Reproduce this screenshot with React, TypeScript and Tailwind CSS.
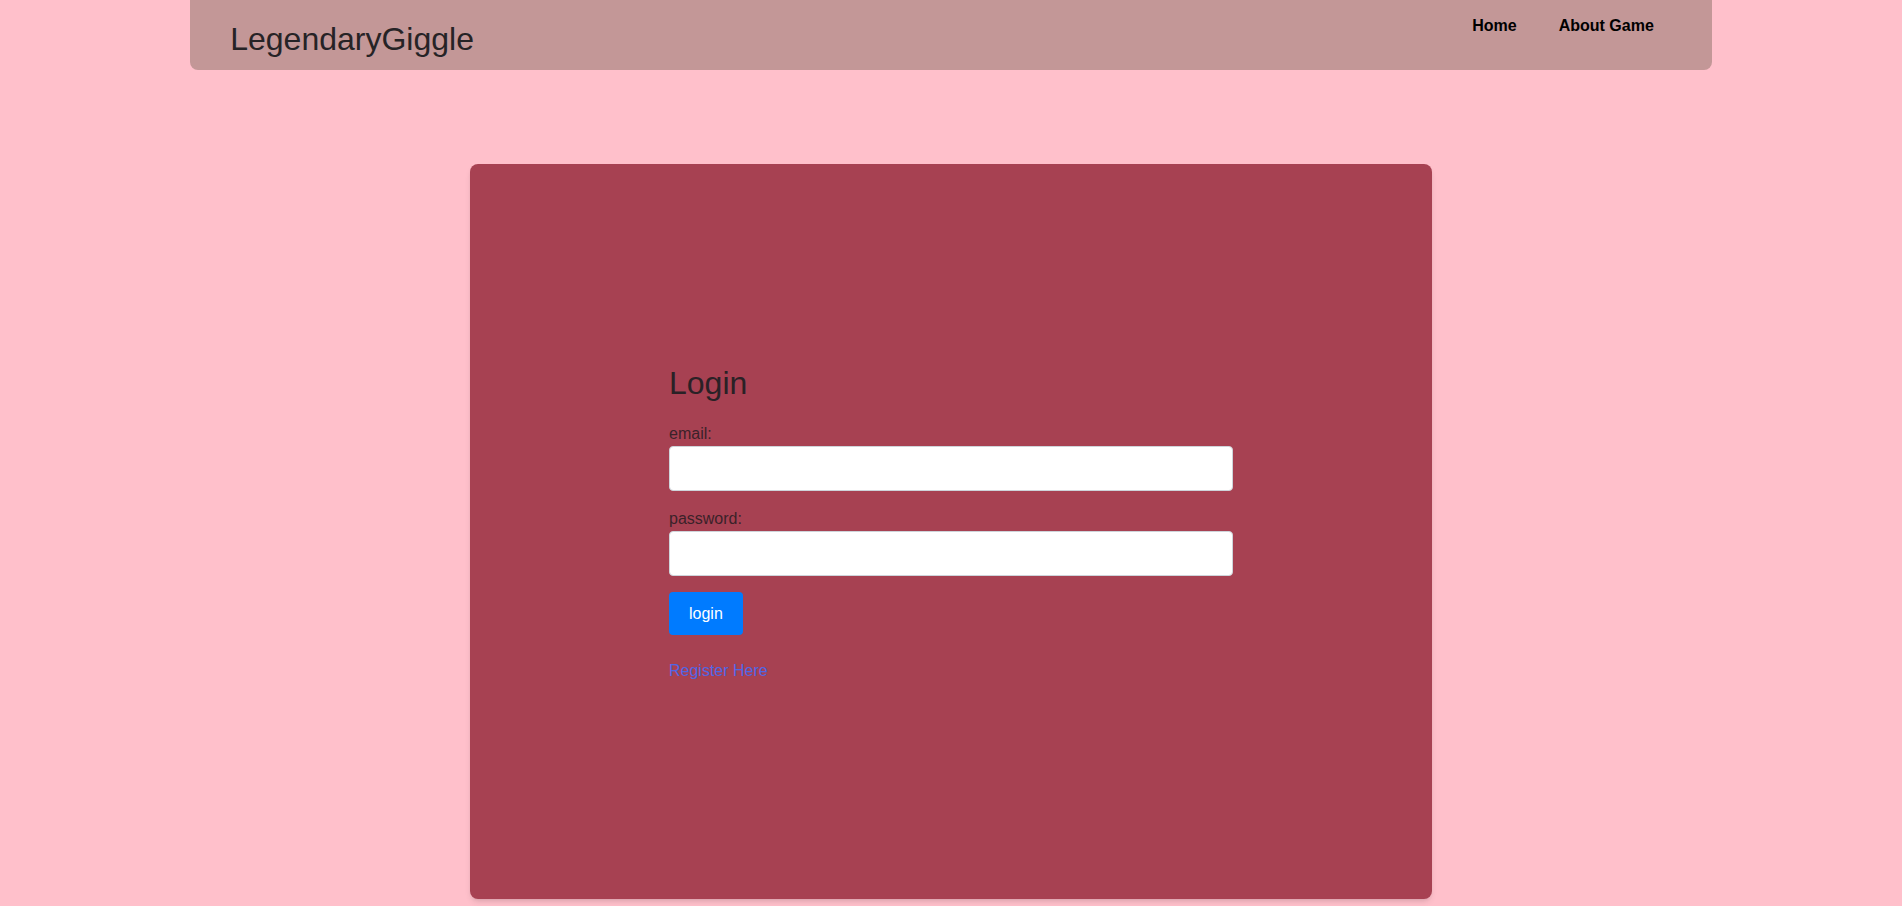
export default function App() {
  return (
    <div className="bg-[#ffc0cb] pb-[7px] font-['Liberation_Sans',Arial,sans-serif]">

      {/* Header */}
      <header className="mx-auto flex h-[70px] w-4/5 items-start justify-between rounded-b-lg bg-[#c39797]">
        <div className="mt-5 pl-[40px] text-[32px] leading-[1.2] text-[#262326]">
          LegendaryGiggle
        </div>
        <nav className="mt-[14px] flex gap-[42px] pr-[58px] text-base leading-6 font-bold text-black">
          <a href="#">Home</a>
          <a href="#">About Game</a>
        </nav>
      </header>

      {/* Login card */}
      <main className="mx-auto mt-[94px] h-[735px] w-[962px] rounded-lg bg-[#a74152] px-[199px] pt-[200px] shadow-md">
        <h2 className="mb-5 text-[32px] leading-[1.2] text-[#2a2126]">Login</h2>

        <label className="block text-base leading-6 text-[#3b2229]">email:</label>
        <input
          type="email"
          className="block h-[45px] w-full rounded border border-[#ced4da] bg-white px-3"
        />

        <label className="mt-4 block text-base leading-6 text-[#3b2229]">password:</label>
        <input
          type="password"
          className="block h-[45px] w-full rounded border border-[#ced4da] bg-white px-3"
        />

        <button className="mt-4 h-[43px] rounded bg-[#007bff] px-5 text-base text-white">
          login
        </button>

        <a href="#" className="mt-6 block w-fit text-base leading-6 text-[#4f66e6]">
          Register Here
        </a>
      </main>
    </div>
  )
}
